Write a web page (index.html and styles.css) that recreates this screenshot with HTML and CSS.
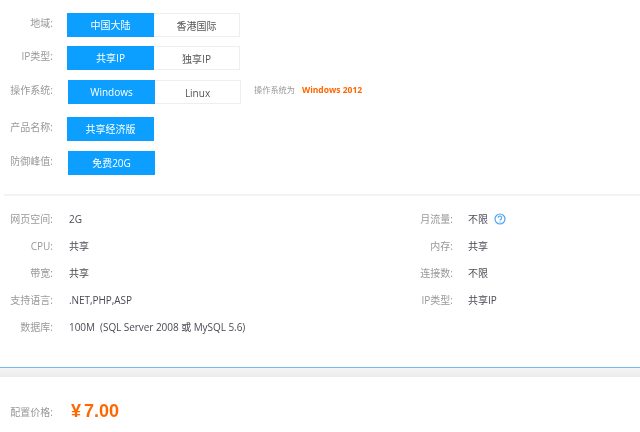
FILE: index.html
```html
<!DOCTYPE html>
<html lang="zh-CN">
<head>
<meta charset="utf-8">
<title>配置</title>
<link rel="stylesheet" href="styles.css">
</head>
<body>
<section class="options">
  <div class="opt r1"><span class="label">地域:</span><div class="group"><span class="btn on">中国大陆</span><span class="btn">香港国际</span></div></div>
  <div class="opt r2"><span class="label">IP类型:</span><div class="group"><span class="btn on">共享IP</span><span class="btn">独享IP</span></div></div>
  <div class="opt r3 shift"><span class="label">操作系统:</span><div class="group"><span class="btn on">Windows</span><span class="btn">Linux</span></div><span class="note">操作系统为</span><b class="os">Windows 2012</b></div>
  <div class="opt r4"><span class="label">产品名称:</span><div class="group"><span class="btn on">共享经济版</span></div></div>
  <div class="opt r5 shift"><span class="label">防御峰值:</span><div class="group"><span class="btn on">免费20G</span></div></div>
</section>
<section class="specs">
  <div class="col">
    <div class="spec"><span class="k">网页空间:</span><span class="v">2G</span></div>
    <div class="spec"><span class="k">CPU:</span><span class="v">共享</span></div>
    <div class="spec"><span class="k">带宽:</span><span class="v">共享</span></div>
    <div class="spec"><span class="k">支持语言:</span><span class="v">.NET,PHP,ASP</span></div>
    <div class="spec"><span class="k">数据库:</span><span class="v">100M&nbsp; (SQL Server 2008 或 MySQL 5.6)</span></div>
  </div>
  <div class="col">
    <div class="spec"><span class="k">月流量:</span><span class="v">不限</span>
      <svg class="help" width="12" height="12" viewBox="0 0 12 12" aria-hidden="true"><circle cx="6" cy="6" r="5" fill="none" stroke="#4aa5f5" stroke-width="1.2"/><path d="M4.3 4.8a1.7 1.7 0 1 1 2.6 1.4c-.6.4-.9.7-.9 1.3" fill="none" stroke="#4aa5f5" stroke-width="1.1"/><circle cx="6" cy="9.1" r=".7" fill="#4aa5f5"/></svg>
    </div>
    <div class="spec"><span class="k">内存:</span><span class="v">共享</span></div>
    <div class="spec"><span class="k">连接数:</span><span class="v">不限</span></div>
    <div class="spec"><span class="k">IP类型:</span><span class="v">共享IP</span></div>
  </div>
</section>
<div class="band"></div>
<section class="price"><span class="k">配置价格:</span><span class="amount"><span class="yen">¥</span>7.00</span></section>
</body>
</html>
```
FILE: styles.css
```css
* { box-sizing: border-box; }
html, body { margin: 0; padding: 0; }
body {
  width: 640px;
  height: 432px;
  overflow: hidden;
  background: #fff;
  font-family: "Open Sans", "Noto Sans CJK SC", sans-serif;
  font-size: 10px;
  color: #555;
  filter: blur(.3px);
}
.options {
  height: 196px;
  padding-top: 13px;
  border-bottom: 2px solid #f3f3f3;
  margin-left: 4px;
}
.opt { display: flex; align-items: flex-start; height: 24px; }
.r1 { margin-bottom: 9px; }
.r2 { margin-bottom: 10px; }
.r3 { margin-bottom: 13px; }
.r4 { margin-bottom: 10px; }
.label {
  width: 49px;
  margin-right: 14px;
  text-align: right;
  color: #999;
  line-height: 20px;
  white-space: nowrap;
}
.shift .group { margin-left: 1px; }
.group { display: flex; }
.btn {
  width: 86px;
  height: 24px;
  line-height: 24px;
  text-align: center;
  background: #fff;
  border: 1px solid #eee;
  border-left: 0;
  color: #555;
}
.btn.on {
  width: 87px;
  background: #0c9fff;
  border: 0;
  color: #fff;
}
.note { margin-left: 13px; font-size: 8.2px; color: #999; line-height: 20px; }
.os { margin-left: 7px; font-size: 8.5px; color: #f60; line-height: 20px; font-weight: 700; }
.specs { display: flex; height: 172px; padding-top: 9px; border-bottom: 1px solid #74bbee; }
.col { width: 416px; }
.col + .col { width: 224px; }
.spec { display: flex; align-items: center; height: 27px; color: #4a4a55; }
.k { width: 53px; text-align: right; color: #999; margin-right: 16px; white-space: nowrap; }
.col + .col .k { width: 37px; margin-right: 15px; }
.v { white-space: nowrap; letter-spacing: -.05px; }
.help { margin-left: 6px; }
.band { height: 9px; background: linear-gradient(#f5f5f5, #ebebeb); }
.price { display: flex; align-items: center; height: 55px; padding-top: 13px; }
.price .k { margin-right: 18px; }
.amount { font-family: "Liberation Sans", sans-serif; font-size: 18px; font-weight: 700; color: #f60; }
.yen { margin-right: 3px; }
```
